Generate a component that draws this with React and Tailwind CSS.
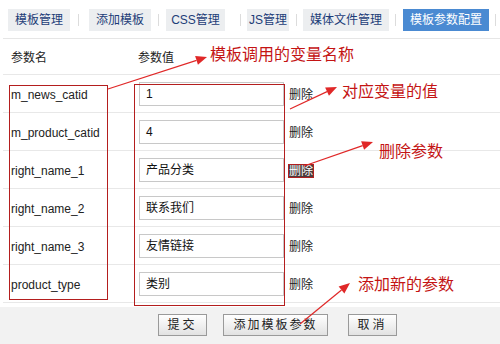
import React from 'react';

const cn = '"Liberation Sans", "Noto Sans CJK SC", sans-serif';

const rows = [
  ['m_news_catid', '1'],
  ['m_product_catid', '4'],
  ['right_name_1', '产品分类'],
  ['right_name_2', '联系我们'],
  ['right_name_3', '友情链接'],
  ['product_type', '类别'],
];

const Arrow = ({ x1, y1, x2, y2 }) => {
  const a = Math.atan2(y2 - y1, x2 - x1);
  const L = 11;
  const W = 4.5;
  const bx = x2 - L * Math.cos(a);
  const by = y2 - L * Math.sin(a);
  const px = -Math.sin(a) * W;
  const py = Math.cos(a) * W;
  return (
    <g>
      <line x1={x1} y1={y1} x2={bx} y2={by} stroke="#e02828" strokeWidth="1.2" />
      <polygon points={`${x2},${y2} ${bx + px},${by + py} ${bx - px},${by - py}`} fill="#e02828" />
    </g>
  );
};

const Tab = ({ children, className = '', active }) => (
  <div
    className={`h-[22px] shrink-0 whitespace-nowrap flex items-center justify-center text-[12px] ${
      active ? 'bg-[#4a8ad2] text-white' : 'bg-[#eceef0] text-[#1d3d78]'
    } ${className}`}
  >
    {children}
  </div>
);

const Sep = ({ className = '' }) => <div className={`w-px h-[12px] shrink-0 bg-[#dcdcdc] ${className}`} />;

const btn = 'h-[22px] border border-[#9a9a9a] bg-gradient-to-b from-[#ffffff] to-[#e2e2e2] text-[12px] text-[#222]';

export default function App() {
  return (
    <div className="relative w-[500px] h-[344px] bg-white overflow-hidden text-[12px] text-[#222]" style={{ fontFamily: cn }}>
      {/* Tabs */}
      <div className="ml-[3px] pt-[9px] pb-[7px] border-b border-[#e6e6e6]">
        <div className="flex items-center pl-[5px]">
          <Tab className="w-[62px]">模板管理</Tab>
          <Sep className="ml-[8px]" />
          <Tab className="w-[62px] ml-[10px]">添加模板</Tab>
          <Sep className="ml-[7px]" />
          <Tab className="w-[59px] ml-[7px]">CSS管理</Tab>
          <Sep className="ml-[15px]" />
          <Tab className="w-[42px] ml-[6px]">JS管理</Tab>
          <Sep className="ml-[7px]" />
          <Tab className="w-[86px] ml-[6px]">媒体文件管理</Tab>
          <Sep className="ml-[6px]" />
          <Tab className="w-[86px] ml-[7px]" active>模板参数配置</Tab>
          <Sep className="ml-[6px]" />
        </div>
      </div>

      {/* Table */}
      <div className="ml-[3px]">
        <div className="flex items-center h-[36px] border-b border-[#e8e8e8]">
          <div className="w-[135px] pl-[8px] pt-[2px]">参数名</div>
          <div className="pt-[2px]">参数值</div>
        </div>
        {rows.map(([k, v], i) => (
          <div key={k} className="flex items-center h-[38px] border-b border-[#e8e8e8]">
            <div className="w-[136px] pl-[8px] pt-[2px]">{k}</div>
            <div className="w-[145px] h-[24px] border border-[#c8c8c8] flex items-center pl-[6px] pt-[1px] text-[12px] text-[#111]">
              {v}
            </div>
            <div className="ml-[5px] pt-[3px]">
              {i === 2 ? (
                <span className="inline-block bg-[#4a3c3c] text-white leading-[12px] outline outline-1 outline-[#b02020]">删除</span>
              ) : (
                '删除'
              )}
            </div>
          </div>
        ))}
      </div>

      {/* Footer */}
      <div className="absolute left-0 right-0 bottom-0 h-[37px] bg-[#f2f2f2] flex items-center justify-center gap-[16px] pl-[55px] pb-[1px]">
        <button className={`${btn} w-[49px] tracking-[3px]`}>提交</button>
        <button className={`${btn} w-[105px] tracking-[2px]`}>添加模板参数</button>
        <button className={`${btn} w-[49px] tracking-[3px] ml-[4px]`}>取消</button>
      </div>

      {/* Annotation boxes */}
      <div className="absolute left-[9px] top-[85px] w-[99px] h-[215px] border border-[#b41e1e]" />
      <div className="absolute left-[134px] top-[84px] w-[151px] h-[222px] border border-[#b41e1e]" />

      <svg className="absolute inset-0 pointer-events-none" width="500" height="344">
        <Arrow x1={108} y1={89} x2={207} y2={57} />
        <Arrow x1={290} y1={109} x2={337} y2={87} />
        <Arrow x1={304} y1={166} x2={373} y2={142} />
        <Arrow x1={300} y1={324} x2={350} y2={283} />
      </svg>

      <div className="absolute left-[210px] top-[43px] text-[16px] text-[#c41414]">模板调用的变量名称</div>
      <div className="absolute left-[342px] top-[80px] text-[16px] text-[#c41414]">对应变量的值</div>
      <div className="absolute left-[379px] top-[140px] text-[16px] text-[#c41414]">删除参数</div>
      <div className="absolute left-[358px] top-[273px] text-[16px] text-[#c41414]">添加新的参数</div>
    </div>
  );
}
